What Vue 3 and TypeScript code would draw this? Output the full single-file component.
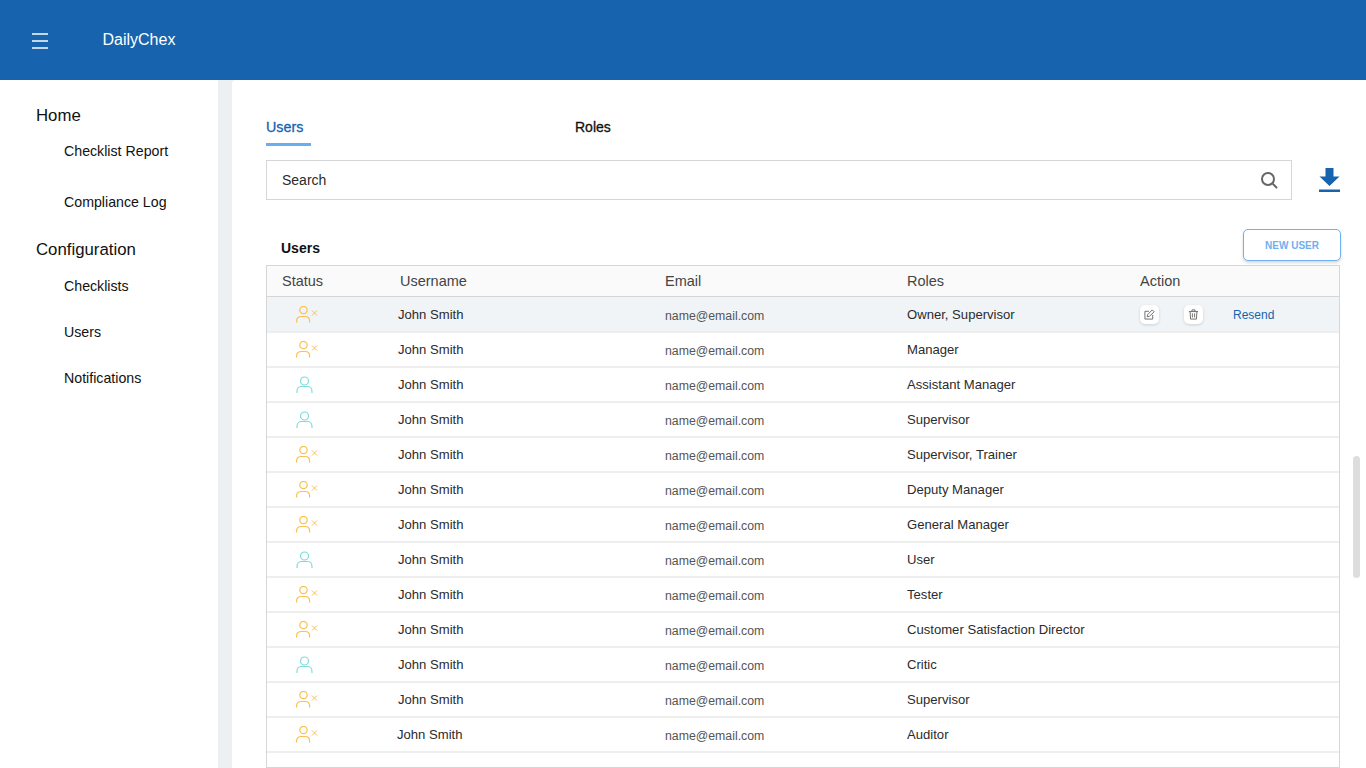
<script setup lang="ts">
type UserRow = { active: boolean; email: string; roles: string; name?: string }

const rows: UserRow[] = [
  { active: false, email: 'name@email.com', roles: 'Owner, Supervisor' },
  { active: false, email: 'name@email.com', roles: 'Manager' },
  { active: true, email: 'name@email.com', roles: 'Assistant Manager' },
  { active: true, email: 'name@email.com', roles: 'Supervisor' },
  { active: false, email: 'name@email.com', roles: 'Supervisor, Trainer' },
  { active: false, email: 'name@email.com', roles: 'Deputy Manager' },
  { active: false, email: 'name@email.com', roles: 'General Manager' },
  { active: true, email: 'name@email.com', roles: 'User' },
  { active: false, email: 'name@email.com', roles: 'Tester' },
  { active: false, email: 'name@email.com', roles: 'Customer Satisfaction Director' },
  { active: true, email: 'name@email.com', roles: 'Critic' },
  { active: false, email: 'name@email.com', roles: 'Supervisor' },
  { active: false, email: 'name@email.com', roles: 'Auditor' },
]
</script>

<template>
  <div class="app">
    <header class="topbar">
      <svg class="menu-icon" viewBox="0 0 16 16" width="16" height="16">
        <path d="M0 1h16M0 8h16M0 15h16" stroke="#fff" stroke-width="1.5" fill="none" />
      </svg>
      <span class="brand">DailyChex</span>
    </header>

    <div class="body">
      <nav class="sidebar">
        <div class="nav-head">Home</div>
        <a class="nav-item first">Checklist Report</a>
        <a class="nav-item log">Compliance Log</a>
        <div class="nav-head config">Configuration</div>
        <a class="nav-item checklists">Checklists</a>
        <a class="nav-item next">Users</a>
        <a class="nav-item next">Notifications</a>
      </nav>

      <main class="content">
        <div class="tabs">
          <div class="tab tab-active">Users</div>
          <div class="tab tab-roles">Roles</div>
        </div>

        <div class="search-row">
          <div class="search">
            <span>Search</span>
            <svg viewBox="0 0 18 18" width="18" height="18" fill="none" stroke="#666" stroke-width="2">
              <circle cx="8" cy="8" r="6" />
              <path d="M12.400 12.400 16.500 16.500" stroke-linecap="round" />
            </svg>
          </div>
          <svg class="download" viewBox="0 0 21 24" width="21" height="24" fill="#1763ae">
            <path d="M6.500 0h8v8.500h6L10.500 18 .5 8.500h6z" />
            <rect x="0" y="21.500" width="21" height="2.500" />
          </svg>
        </div>

        <div class="table-head-row">
          <h2>Users</h2>
          <button class="new-user">NEW USER</button>
        </div>

        <div class="table">
          <div class="row row-head">
            <div>Status</div>
            <div>Username</div>
            <div>Email</div>
            <div>Roles</div>
            <div>Action</div>
          </div>
          <div v-for="(row, i) in rows" :key="i" class="row" :class="{ selected: i === 0 }">
            <div class="status">
              <svg v-if="row.active" viewBox="0 0 17 18" width="17" height="18" fill="none" stroke="#7fdcdc" stroke-width="1.2">
                <circle cx="8.500" cy="5" r="4" />
                <path d="M1 17v-1.500C1 12 3.500 10.500 5.500 10.500h6c2 0 4.500 1.500 4.500 5V17" />
              </svg>
              <svg v-else viewBox="0 0 22 18" width="22" height="18" fill="none" stroke="#fcc04f" stroke-width="1.2">
                <circle cx="7.500" cy="4" r="3.700" />
                <path d="M.6 16.500V15c0-3 2.400-4.500 5-4.500h3.500c2.500 0 4.500 1.500 4.500 4.500v1.500" />
                <path stroke-width="1" d="M16 4.500l5 5M21 4.500l-5 5" />
              </svg>
            </div>
            <div class="name" :class="{ shifted: i === rows.length - 1 }">John Smith</div>
            <div class="email">{{ row.email }}</div>
            <div class="roles">{{ row.roles }}</div>
            <div v-if="i === 0" class="actions">
              <span class="icon-btn">
                <svg viewBox="0 0 12 12" width="11" height="11" fill="none" stroke="#666" stroke-width="1">
                  <path d="M5.500 2.500H1V11h8.500V6.500" />
                  <path d="M3.500 8.500l.6-2.500L9 1l2 2-5 5z" />
                </svg>
              </span>
              <span class="icon-btn second">
                <svg viewBox="0 0 12 12" width="11" height="11" fill="none" stroke="#666" stroke-width="1">
                  <path d="M1 2.800h10M4.300 2.800V1h3.400v1.800M2.300 2.800l.5 8.200h6.400l.5-8.200M4.800 4.800v4.400M7.200 4.800v4.400" />
                </svg>
              </span>
              <a class="resend">Resend</a>
            </div>
          </div>
          <div class="table-tail"></div>
        </div>
      </main>
    </div>

    <div class="scroll-thumb"></div>
  </div>
</template>

<style>
html,
body {
  margin: 0;
  overflow: hidden;
}
</style>

<style scoped>
.app {
  position: relative;
  width: 1366px;
  height: 768px;
  overflow: hidden;
  background: #fff;
  color: #2b2b2b;
  font-family: "Liberation Sans", Arial, sans-serif;
  font-size: 13.1px;
}

.topbar {
  display: flex;
  align-items: center;
  height: 80px;
  padding-left: 32px;
  box-sizing: border-box;
  background: #1763ae;
  color: #fff;
}

.menu-icon {
  margin-top: 2px;
}

.brand {
  margin-left: 54.500px;
  font-size: 16px;
}

.body {
  display: flex;
  height: 688px;
  background: #ecf0f3;
}

.sidebar {
  width: 218px;
  flex: none;
  box-sizing: border-box;
  padding: 26px 0 0 36px;
  background: #fff;
  color: #111;
}

.nav-head {
  font-size: 16.800px;
  line-height: 19px;
}

.nav-item {
  display: block;
  margin-left: 28px;
  font-size: 14.200px;
  line-height: 16px;
}

.first {
  margin-top: 18px;
}

.log {
  margin-top: 35px;
}

.config {
  margin-top: 30px;
}

.checklists {
  margin-top: 19px;
}

.next {
  margin-top: 30px;
}

.content {
  flex: 1;
  margin-left: 14px;
  padding: 39px 26px 0 34px;
  background: #fff;
  border-top-left-radius: 4px;
  min-width: 0;
}

.tabs {
  display: flex;
  height: 27px;
}

.tab {
  font-size: 14.300px;
  line-height: 16px;
}

.tab-active {
  width: 45px;
  height: 27px;
  box-sizing: border-box;
  border-bottom: 3px solid #6aaef2;
  color: #1763ae;
  -webkit-text-stroke: 0.3px #1763ae;
}

.tab-roles {
  margin-left: 264px;
  color: #111;
  font-size: 14px;
  -webkit-text-stroke: 0.3px #111;
}

.search-row {
  display: flex;
  align-items: center;
  margin-top: 14px;
}

.search {
  display: flex;
  align-items: center;
  justify-content: space-between;
  width: 1026px;
  height: 40px;
  box-sizing: border-box;
  padding: 0 13px 0 15px;
  border: 1px solid #d6d6d6;
  font-size: 14px;
  color: #2b2b2b;
}

.download {
  margin-left: 27px;
}

.table-head-row {
  display: flex;
  align-items: center;
  justify-content: space-between;
  width: 1075px;
  height: 32px;
  margin-top: 29px;
  padding-left: 15px;
  box-sizing: border-box;
}

.table-head-row h2 {
  margin: 5px 0 0;
  font-size: 14px;
  font-weight: 700;
  color: #111;
}

.new-user {
  width: 98px;
  height: 32px;
  padding: 0;
  border: 1px solid #6eb0f0;
  border-radius: 5px;
  background: #fff;
  box-shadow: 0 2px 3px rgb(0 0 0 / 15%);
  color: #6eb0f0;
  font-family: inherit;
  font-size: 10px;
  font-weight: 700;
}

.table {
  width: 1074px;
  margin-top: 4px;
  box-sizing: border-box;
  border: 1px solid #d6d6d6;
}

.row {
  display: grid;
  grid-template-columns: 133px 265px 242px 233px 1fr;
  align-items: center;
  height: 35px;
  box-sizing: border-box;
  border-bottom: 2px solid #eee;
}

.row-head {
  height: 31px;
  padding-left: 15px;
  grid-template-columns: 118px 265px 242px 233px 1fr;
  border-bottom: 1px solid #d6d6d6;
  background: #fafafa;
  color: #444;
  font-size: 14.500px;
}

.selected {
  height: 36px;
  padding-top: 1px;
  background: #f0f4f7;
}

.status {
  display: flex;
  padding-left: 29px;
}

.name {
  margin-left: -2px;
}

.shifted {
  margin-left: -3px;
}

.email {
  position: relative;
  top: 1px;
  color: #555;
  font-size: 12.300px;
}

.actions {
  display: flex;
  align-items: center;
}

.icon-btn {
  display: flex;
  align-items: center;
  justify-content: center;
  width: 19px;
  height: 19px;
  border-radius: 5px;
  background: #fff;
  box-shadow: 0 1px 3px rgb(0 0 0 / 15%);
}

.second {
  margin-left: 25px;
}

.resend {
  margin-left: 30px;
  font-size: 12px;
  color: #1763ae;
}

.table-tail {
  height: 14px;
}

.scroll-thumb {
  position: absolute;
  left: 1353px;
  top: 456px;
  width: 7px;
  height: 122px;
  border-radius: 4px;
  background: #ddd;
}
</style>
